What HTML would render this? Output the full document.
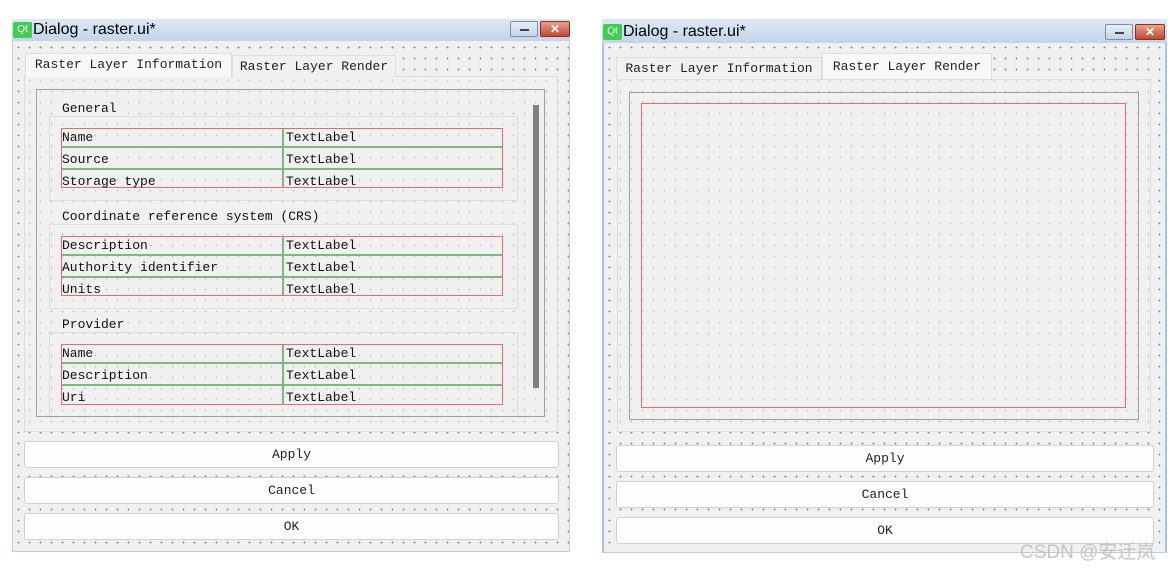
<!DOCTYPE html>
<html><head><style>
*{margin:0;padding:0;box-sizing:border-box}
body{width:1174px;height:569px;background:#fff;position:relative;overflow:hidden;font-family:"Liberation Mono","Noto Sans CJK SC",monospace;font-size:12.5px;color:#222}
.a{position:absolute}
.dlg{background-color:#f0f0f0;background-image:radial-gradient(circle,#8a8a8a 0.8px,transparent 1.1px);background-size:11px 11px;border:1px solid #b9cde4}
.title{background:linear-gradient(#dde8f4,#c3d5ea);font-family:"Liberation Sans",sans-serif;font-size:16px;color:#000;padding-left:21px;line-height:22px}
.qt{position:absolute;left:1px;top:3px;width:19px;height:16px;background:#41cd52;color:#fff;font-size:10px;line-height:16px;text-align:center;border-radius:2px;font-family:"Liberation Sans",sans-serif}
.pane{border:1px solid #dcdcdc;background-color:rgba(240,240,240,.6)}
.tab{background:#f0f0f0;border:1px solid #dcdcdc;border-bottom:none;text-align:center;line-height:22px;font-size:13px}
.tab.act{background:#f8f8f8}
.frame{border:1px solid #a0a0a0}
.gb{border:1px solid #dcdcdc}
.row{position:absolute;border:1.5px solid #f06a6a}
.cell{position:absolute;left:0;right:0;height:2px;background:#7fb87f}
.vd{position:absolute;left:220px;top:0;bottom:0;width:2px;background:#7fb87f}
.lbl{position:absolute;font-size:13px;line-height:14px;color:#111}
.btn{position:absolute;background:#fdfdfd;border:1px solid #d0d0d0;border-radius:3px;text-align:center;font-size:13px;line-height:26px}
.wb{position:absolute;top:2px;height:16px;border:1px solid #7a8fa8;border-radius:2px}
</style></head><body>

<!-- LEFT DIALOG -->
<div class="a dlg" style="left:12px;top:19px;width:558px;height:533px"></div>
<div class="a title" style="left:12px;top:19px;width:558px;height:22px"><span class="qt">Qt</span>Dialog - raster.ui*
<div class="wb" style="left:498px;width:28px;background:linear-gradient(#e6eef8,#c4d3e6)"><div style="position:absolute;left:9px;top:7px;width:9px;height:2px;background:#444"></div></div>
<div class="wb" style="left:528px;width:30px;background:linear-gradient(#e8a08c,#c04a30);border-color:#8a3020;color:#fff;font-size:12px;line-height:14px;text-align:center;font-weight:bold">✕</div>
</div>
<div class="a pane" style="left:24px;top:76px;width:534px;height:356px"></div>
<div class="a tab act" style="left:25px;top:53px;width:207px;height:24px">Raster Layer Information</div>
<div class="a tab" style="left:232px;top:55px;width:164px;height:22px">Raster Layer Render</div>
<div class="a frame" style="left:36px;top:89px;width:509px;height:328px"></div>
<div class="a" style="left:533px;top:105px;width:6px;height:283px;background:#808080"></div>

<div class="a gb" style="left:49px;top:116px;width:469px;height:85px"></div>
<div class="a lbl" style="left:60px;top:102px;background:#f0f0f0;padding:0 2px">General</div>
<div class="row" style="left:61px;top:128px;width:442px;height:60px"><div class="cell" style="top:17px"></div><div class="cell" style="top:39px"></div><div class="vd"></div></div>
<div class="lbl" style="left:62px;top:131px">Name</div><div class="lbl" style="left:286px;top:131px">TextLabel</div>
<div class="lbl" style="left:62px;top:153px">Source</div><div class="lbl" style="left:286px;top:153px">TextLabel</div>
<div class="lbl" style="left:62px;top:175px">Storage type</div><div class="lbl" style="left:286px;top:175px">TextLabel</div>

<div class="a gb" style="left:49px;top:224px;width:469px;height:85px"></div>
<div class="a lbl" style="left:60px;top:210px;background:#f0f0f0;padding:0 2px">Coordinate reference system (CRS)</div>
<div class="row" style="left:61px;top:236px;width:442px;height:60px"><div class="cell" style="top:17px"></div><div class="cell" style="top:39px"></div><div class="vd"></div></div>
<div class="lbl" style="left:62px;top:239px">Description</div><div class="lbl" style="left:286px;top:239px">TextLabel</div>
<div class="lbl" style="left:62px;top:261px">Authority identifier</div><div class="lbl" style="left:286px;top:261px">TextLabel</div>
<div class="lbl" style="left:62px;top:283px">Units</div><div class="lbl" style="left:286px;top:283px">TextLabel</div>

<div class="a gb" style="left:49px;top:332px;width:469px;height:84px;border-bottom:none"></div>
<div class="a lbl" style="left:60px;top:318px;background:#f0f0f0;padding:0 2px">Provider</div>
<div class="row" style="left:61px;top:344px;width:442px;height:61px"><div class="cell" style="top:17px"></div><div class="cell" style="top:39px"></div><div class="vd"></div></div>
<div class="lbl" style="left:62px;top:347px">Name</div><div class="lbl" style="left:286px;top:347px">TextLabel</div>
<div class="lbl" style="left:62px;top:369px">Description</div><div class="lbl" style="left:286px;top:369px">TextLabel</div>
<div class="lbl" style="left:62px;top:391px">Uri</div><div class="lbl" style="left:286px;top:391px">TextLabel</div>

<div class="btn" style="left:24px;top:441px;width:535px;height:27px">Apply</div>
<div class="btn" style="left:24px;top:477px;width:535px;height:27px">Cancel</div>
<div class="btn" style="left:24px;top:513px;width:535px;height:27px">OK</div>

<!-- RIGHT DIALOG -->
<div class="a dlg" style="left:602px;top:19px;width:565px;height:534px;border-left:2px solid #a8c4e4;border-right:2px solid #a8c4e4"></div>
<div class="a title" style="left:602px;top:19px;width:565px;height:24px;line-height:26px"><span class="qt" style="top:5px">Qt</span>Dialog - raster.ui*
<div class="wb" style="left:503px;top:5px;width:28px;background:linear-gradient(#e6eef8,#c4d3e6)"><div style="position:absolute;left:9px;top:7px;width:9px;height:2px;background:#444"></div></div>
<div class="wb" style="left:533px;top:5px;width:30px;background:linear-gradient(#e8a08c,#c04a30);border-color:#8a3020;color:#fff;font-size:12px;line-height:14px;text-align:center;font-weight:bold">✕</div>
</div>
<div class="a pane" style="left:617px;top:79px;width:534px;height:353px"></div>
<div class="a tab" style="left:616px;top:57px;width:206px;height:22px">Raster Layer Information</div>
<div class="a tab act" style="left:822px;top:53px;width:170px;height:26px;line-height:26px">Raster Layer Render</div>
<div class="a frame" style="left:629px;top:92px;width:510px;height:328px"></div>
<div class="a" style="left:641px;top:103px;width:485px;height:305px;border:1.5px solid #f06a6a"></div>

<div class="btn" style="left:616px;top:445px;width:538px;height:27px">Apply</div>
<div class="btn" style="left:616px;top:481px;width:538px;height:27px">Cancel</div>
<div class="btn" style="left:616px;top:517px;width:538px;height:27px">OK</div>

<div class="a" style="left:1020px;top:537px;font-family:'Liberation Sans','Noto Sans CJK SC',sans-serif;font-size:19px;color:#c4c4c4;white-space:nowrap">CSDN @安迁岚</div>
</body></html>
